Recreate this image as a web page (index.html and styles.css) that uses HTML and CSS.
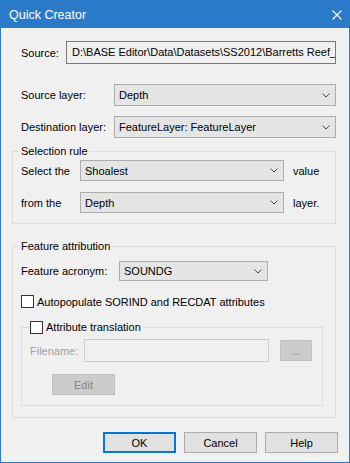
FILE: index.html
```html
<!DOCTYPE html>
<html lang="en">
<head>
    <meta charset="UTF-8">
    <meta name="viewport" content="width=device-width, initial-scale=1.0">
    <title>Quick Creator</title>
    <link rel="stylesheet" href="styles.css">
</head>
<body>
    <div class="window">
        <div class="titlebar">
            <span class="title">Quick Creator</span>
            <svg class="close" width="10" height="10" viewBox="0 0 10 10">
                <path d="M0.5 0.5 L9.5 9.5 M9.5 0.5 L0.5 9.5" stroke="#fff" stroke-width="1.1" fill="none"/>
            </svg>
        </div>

        <div class="content">
            <div class="row row-source">
                <span class="lbl lbl-source">Source:</span>
                <div class="textbox">D:\BASE Editor\Data\Datasets\SS2012\Barretts Reef_</div>
            </div>

            <div class="row row-layer">
                <span class="lbl lbl-layer">Source layer:</span>
                <div class="combo"><span>Depth</span><svg class="chev" width="8" height="5" viewBox="0 0 8 5"><path d="M0.5 0.5 L4 4 L7.5 0.5" stroke="#444" fill="none"/></svg></div>
            </div>

            <div class="row row-dest">
                <span class="lbl lbl-layer">Destination layer:</span>
                <div class="combo"><span>FeatureLayer: FeatureLayer</span><svg class="chev" width="8" height="5" viewBox="0 0 8 5"><path d="M0.5 0.5 L4 4 L7.5 0.5" stroke="#444" fill="none"/></svg></div>
            </div>

            <fieldset class="group group-rule">
                <legend>Selection rule</legend>
                <div class="rule-row">
                    <span class="lbl lbl-rule">Select the</span>
                    <div class="combo combo-rule"><span>Shoalest</span><svg class="chev" width="8" height="5" viewBox="0 0 8 5"><path d="M0.5 0.5 L4 4 L7.5 0.5" stroke="#444" fill="none"/></svg></div>
                    <span class="suffix">value</span>
                </div>
                <div class="rule-row rule-row-2">
                    <span class="lbl lbl-rule">from the</span>
                    <div class="combo combo-rule"><span>Depth</span><svg class="chev" width="8" height="5" viewBox="0 0 8 5"><path d="M0.5 0.5 L4 4 L7.5 0.5" stroke="#444" fill="none"/></svg></div>
                    <span class="suffix">layer.</span>
                </div>
            </fieldset>

            <fieldset class="group group-feature">
                <legend>Feature attribution</legend>
                <div class="acronym-row">
                    <span class="lbl lbl-acronym">Feature acronym:</span>
                    <div class="combo combo-acronym"><span>SOUNDG</span><svg class="chev" width="8" height="5" viewBox="0 0 8 5"><path d="M0.5 0.5 L4 4 L7.5 0.5" stroke="#444" fill="none"/></svg></div>
                </div>
                <div class="check-row">
                    <span class="checkbox"></span>
                    <span class="check-text">Autopopulate SORIND and RECDAT attributes</span>
                </div>

                <fieldset class="group group-translation">
                    <legend class="check-legend">
                        <span class="checkbox"></span>
                        <span class="check-text">Attribute translation</span>
                    </legend>
                    <div class="file-row">
                        <span class="lbl lbl-file">Filename:</span>
                        <div class="textbox textbox-off"></div>
                        <div class="btn btn-off btn-browse">...</div>
                    </div>
                    <div class="edit-row">
                        <div class="btn btn-off btn-edit">Edit</div>
                    </div>
                </fieldset>
            </fieldset>

            <div class="buttons">
                <div class="btn btn-default">OK</div>
                <div class="btn">Cancel</div>
                <div class="btn">Help</div>
            </div>
        </div>
    </div>
</body>
</html>
```

FILE: styles.css
```css
html, body {
    margin: 0;
    padding: 0;
    background: #f0f0f0;
}
body {
    font-family: "Liberation Sans", Arial, sans-serif;
    font-size: 11px;
    color: #000;
}
.window {
    width: 350px;
    height: 463px;
    box-sizing: border-box;
    border: 1px solid #2b79c9;
    background: #f0f0f0;
}
.titlebar {
    height: 27px;
    background: #2b79c9;
    display: flex;
    align-items: center;
    justify-content: space-between;
    padding: 0 7px 0 8px;
}
.title {
    color: #fff;
    font-size: 12.5px;
}
.close {
    display: block;
}
.content {
    padding: 13px 13px 0 11px;
}
.row {
    display: flex;
    align-items: center;
    padding-left: 9px;
}
.row-layer {
    margin-top: 20px;
}
.row-dest {
    margin-top: 10px;
}
.lbl {
    flex: none;
    white-space: nowrap;
}
.lbl-source {
    width: 45px;
}
.lbl-layer {
    width: 93px;
}
.textbox {
    flex: 1;
    height: 23px;
    box-sizing: border-box;
    border: 1px solid #7a7a7a;
    background: #f0f0f0;
    padding: 0 2px 0 5px;
    line-height: 21px;
    white-space: nowrap;
    overflow: hidden;
}
.combo {
    flex: 1;
    height: 22px;
    box-sizing: border-box;
    border: 1px solid #adadad;
    background: #e5e5e5;
    display: flex;
    align-items: center;
    justify-content: space-between;
    padding: 0 5px 0 4px;
    white-space: nowrap;
}
.chev {
    display: block;
    flex: none;
}

/* group boxes */
.group {
    margin: 6px 0 0 0;
    border: 1px solid #dcdcdc;
    padding: 1px 10px 10px 8px;
    min-width: 0;
}
.group legend {
    padding: 0 2px;
    margin-left: -2px;
    line-height: 15px;
}
.rule-row {
    display: flex;
    align-items: center;
}
.rule-row-2 {
    margin-top: 11px;
}
.lbl-rule {
    width: 59px;
}
.combo-rule {
    flex: none;
    width: 204px;
    height: 21px;
}
.suffix {
    margin-left: 9px;
}

.group-feature {
    margin-top: 15px;
    padding: 7px 12px 11px 8px;
}
.acronym-row {
    display: flex;
    align-items: center;
}
.lbl-acronym {
    width: 98px;
}
.combo-acronym {
    flex: none;
    width: 149px;
    height: 20px;
}
.check-row {
    display: flex;
    align-items: center;
    height: 13px;
    margin-top: 14px;
}
.checkbox {
    flex: none;
    width: 13px;
    height: 13px;
    box-sizing: border-box;
    border: 1px solid #333;
    background: #fff;
}
.check-text {
    margin-left: 3px;
    white-space: nowrap;
}

.group-translation {
    margin-top: 12px;
    padding: 4px 10px 10px 8px;
}
.group-translation .check-legend {
    display: flex;
    align-items: center;
    height: 15px;
    padding: 0 2px 0 0;
    margin-left: 0;
}
.file-row {
    display: flex;
    align-items: center;
}
.lbl-file {
    width: 54px;
    color: #a0a0a0;
}
.textbox-off {
    flex: none;
    width: 185px;
    border-color: #cccccc;
}

/* buttons */
.btn {
    width: 73px;
    height: 21px;
    box-sizing: border-box;
    border: 1px solid #adadad;
    background: #e1e1e1;
    display: flex;
    align-items: center;
    justify-content: center;
}
.btn-default {
    border: 2px solid #0078d7;
}
.btn-off {
    background: #cccccc;
    border-color: #bfbfbf;
    color: #838383;
}
.btn-browse {
    width: 33px;
    margin-left: 11px;
}
.edit-row {
    margin-top: 12px;
    padding-left: 22px;
}
.btn-edit {
    width: 63px;
}
.buttons {
    display: flex;
    justify-content: flex-end;
    gap: 8px;
    margin: 14px -2px 0 0;
}
```
